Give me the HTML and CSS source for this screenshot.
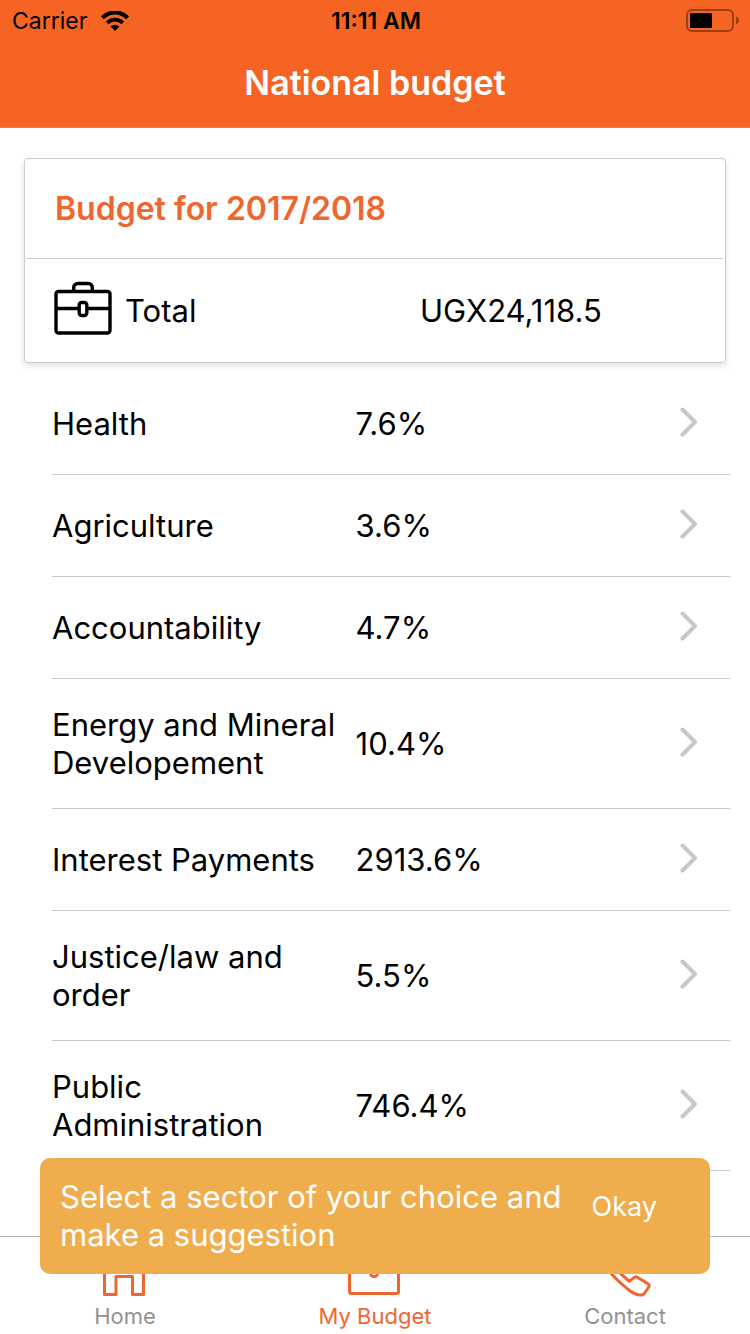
FILE: index.html
```html
<!DOCTYPE html>
<html lang="en">
<head>
<meta charset="utf-8">
<meta name="viewport" content="width=device-width, initial-scale=1">
<title>National budget</title>
<link rel="stylesheet" href="styles.css">
</head>
<body>
<div class="app">
  <header class="header">
    <div class="status">
      <div class="carrier">
        <span>Carrier</span>
        <svg class="wifi" viewBox="0 0 28 20" aria-hidden="true">
          <path d="M1.4 6.8a17.600 17.600 0 0 1 25.200 0" fill="none" stroke="#000" stroke-width="4.200"/>
          <path d="M6.2 11.800a11 11 0 0 1 15.600 0" fill="none" stroke="#000" stroke-width="3.800"/>
          <path d="M14 20l-4.400-4.400a6.200 6.200 0 0 1 8.800 0z"/>
        </svg>
      </div>
      <span class="time">11:11 AM</span>
      <div class="power">
        <svg class="battery" viewBox="0 0 54 24" aria-hidden="true">
          <rect x="1" y="1" width="46" height="21" rx="5" fill="none" stroke="#9c3f0c" stroke-width="2"/>
          <rect x="4" y="4" width="22" height="15" rx="1"/>
          <path d="M50 7.500c4 1.500 4 6.500 0 8z" fill="#9c3f0c"/>
        </svg>
      </div>
    </div>
    <h1 class="title">National budget</h1>
  </header>

  <main class="content">
    <section class="card">
      <h2 class="card-title">Budget for 2017/2018</h2>
      <div class="total">
        <svg class="case" viewBox="0 0 58 54" fill="none" stroke="#000" stroke-width="3.400" aria-hidden="true">
          <rect x="2" y="10.500" width="54" height="41.500" rx="2.500"/>
          <path d="M19.700 10V6.500a4 4 0 0 1 4-4h10.600a4 4 0 0 1 4 4V10M2 27.500h22.500M33.500 27.500H56"/>
          <rect x="25.200" y="21.500" width="7.600" height="13" rx="2.500"/>
        </svg>
        <span class="total-label">Total</span>
        <span class="total-value">UGX24,118.5</span>
      </div>
    </section>

    <ul class="list">
      <li><button class="row"><span class="name">Health</span><span class="value">7.6%</span><svg class="chevron" viewBox="0 0 18 30"><path d="M2.500 2.500L15 15 2.500 27.500"/></svg></button></li>
      <li><button class="row"><span class="name">Agriculture</span><span class="value">3.6%</span><svg class="chevron" viewBox="0 0 18 30"><path d="M2.500 2.500L15 15 2.500 27.500"/></svg></button></li>
      <li><button class="row"><span class="name">Accountability</span><span class="value">4.7%</span><svg class="chevron" viewBox="0 0 18 30"><path d="M2.500 2.500L15 15 2.500 27.500"/></svg></button></li>
      <li><button class="row"><span class="name">Energy and Mineral Developement</span><span class="value">10.4%</span><svg class="chevron" viewBox="0 0 18 30"><path d="M2.500 2.500L15 15 2.500 27.500"/></svg></button></li>
      <li><button class="row"><span class="name">Interest Payments</span><span class="value">2913.6%</span><svg class="chevron" viewBox="0 0 18 30"><path d="M2.500 2.500L15 15 2.500 27.500"/></svg></button></li>
      <li><button class="row"><span class="name">Justice/law and order</span><span class="value">5.5%</span><svg class="chevron" viewBox="0 0 18 30"><path d="M2.500 2.500L15 15 2.500 27.500"/></svg></button></li>
      <li><button class="row"><span class="name">Public Administration</span><span class="value">746.4%</span><svg class="chevron" viewBox="0 0 18 30"><path d="M2.500 2.500L15 15 2.500 27.500"/></svg></button></li>
    </ul>
  </main>

  <nav class="tabs">
    <a class="tab" href="#home">
      <svg class="tab-icon" viewBox="0 0 60 60" aria-hidden="true"><path d="M9.500 28v28.500H21v-18h16.500v18h11V28M4 31L29 7l25 24"/></svg>
      <span>Home</span>
    </a>
    <a class="tab active" href="#budget">
      <svg class="tab-icon" viewBox="0 0 60 60" aria-hidden="true"><rect x="4.500" y="17" width="49" height="38.500" rx="2"/><path d="M21 17v-4a3 3 0 0 1 3-3h10a3 3 0 0 1 3 3v4M5 32h20M33 32h20"/><rect x="25.500" y="27" width="7" height="11.500" rx="3"/></svg>
      <span>My Budget</span>
    </a>
    <a class="tab" href="#contact">
      <svg class="tab-icon" viewBox="0 0 60 60" aria-hidden="true"><path d="M8 13l6-5q2-1 3 1l7 9q1 2-1 4l-4 4q2 4 7 10l8.300 7.300 5-4q1.500-1 3.500.2l10.500 6.500q1.500 1.500.5 3l-4.500 6.500q-1.500 2-5 1.500-4-.5-9.300-4C29 48 17 39 9 26q-4-9-1-13z"/></svg>
      <span>Contact</span>
    </a>
  </nav>

  <div class="toast" role="status">
    <p class="toast-text">Select a sector of your choice and make a suggestion</p>
    <button class="toast-action">Okay</button>
  </div>
</div>
</body>
</html>
```

FILE: styles.css
```css
* { box-sizing: border-box; }

body {
  margin: 0;
  background: #fff;
  color: #000;
  font-family: Inter, "Liberation Sans", sans-serif;
  font-size: 31px;
  line-height: 38px;
}

h1, h2, p, ul { margin: 0; padding: 0; }

button {
  border: 0;
  padding: 0;
  background: none;
  color: inherit;
  font: inherit;
  text-align: left;
}

.app {
  position: relative;
  display: flex;
  flex-direction: column;
  height: 100vh;
  overflow: hidden;
}

.header {
  flex: none;
  background: #f56423;
  border-bottom: 1px solid #bd8a72;
}

.status {
  display: grid;
  grid-template-columns: 1fr auto 1fr;
  align-items: center;
  height: 42px;
  padding: 0 10px 0 12px;
  font-size: 23px;
}

.carrier {
  display: flex;
  align-items: center;
  gap: 14px;
}

.wifi { width: 28px; height: 20px; }

.time { font-weight: 600; }

.power { display: flex; justify-content: flex-end; }

.battery { width: 54px; height: 24px; }

.title {
  padding: 22px 0 25px;
  color: #fff;
  font-size: 34px;
  font-weight: 600;
  text-align: center;
}

.content {
  flex: 1;
  min-height: 0;
  overflow: hidden;
  padding-top: 30px;
}

.card {
  margin: 0 24px 10px;
  padding: 0 2px;
  border: 1px solid #ccc;
  border-radius: 4px;
  box-shadow: 0 3px 6px rgba(0, 0, 0, 0.12);
}

.card-title {
  padding: 31px 28px 30px;
  border-bottom: 1px solid #c9c9c9;
  color: #ee6730;
  font-size: 32px;
  font-weight: 600;
}

.total {
  display: flex;
  align-items: center;
  height: 103px;
  padding: 0 27px;
}

.case { width: 58px; height: 54px; margin: 0 13px 5px 0; }

.total-label { flex: 1; }

.total-value { flex: 0 0 43%; }

.list {
  margin: 0 20px 0 52px;
  list-style: none;
}

.row {
  display: flex;
  align-items: center;
  width: 100%;
  min-height: 102px;
  padding: 27px 32px 26px 0;
  border-bottom: 1px solid #c9c9c9;
}

.name { flex: 0 0 47%; padding-right: 20px; }

.value { flex: 1; }

.chevron {
  width: 18px;
  height: 30px;
  margin-bottom: 4px;
  fill: none;
  stroke: #c7c7cc;
  stroke-width: 4;
  stroke-linecap: round;
  stroke-linejoin: round;
}

.tabs {
  flex: none;
  display: flex;
  height: 98px;
  border-top: 1px solid #b2b2b2;
  background: #fff;
}

.tab {
  flex: 1;
  display: flex;
  flex-direction: column;
  align-items: center;
  gap: 2px;
  padding-top: 1px;
  color: #929292;
  font-size: 22px;
  line-height: 32px;
  text-decoration: none;
}

.tab.active { color: #ee6730; }

.tab-icon {
  width: 60px;
  height: 60px;
  fill: none;
  stroke: #ee6730;
  stroke-width: 3;
  stroke-linejoin: round;
}

.toast {
  position: absolute;
  right: 40px;
  bottom: 60px;
  left: 40px;
  display: flex;
  align-items: flex-start;
  padding: 20px;
  border-radius: 10px;
  background: #efad4e;
  color: #fff;
}

.toast-text { flex: 1; }

.toast-action {
  margin-top: 10px;
  padding: 0 33px 0 20px;
  font-size: 27px;
}
```
